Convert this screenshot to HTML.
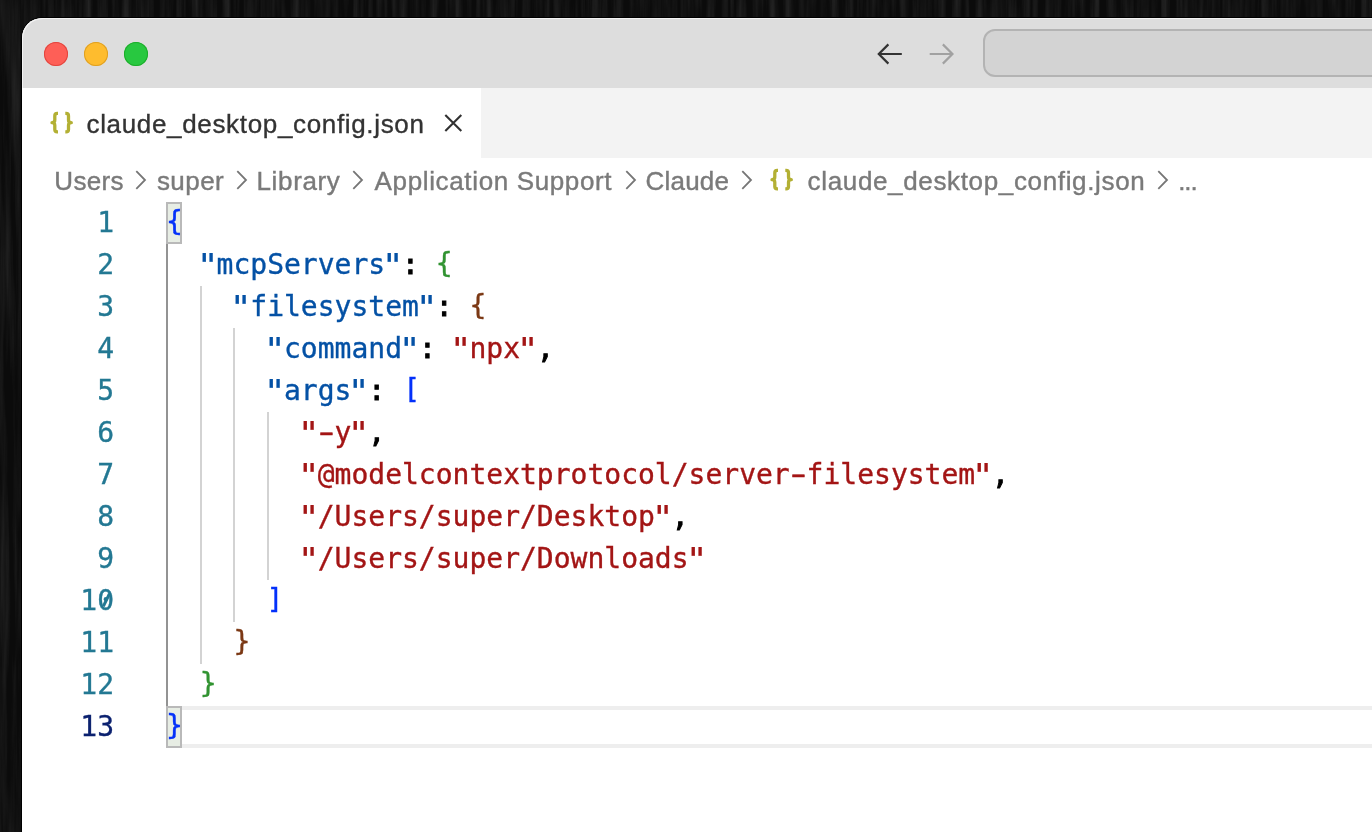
<!DOCTYPE html>
<html lang="en">
<head>
<meta charset="utf-8">
<title>claude_desktop_config.json</title>
<style>
*{box-sizing:border-box;margin:0;padding:0}
html,body{width:1372px;height:832px;overflow:hidden}
body{position:relative;background:#0b0b0b;font-family:"Liberation Sans",sans-serif}
.wood{position:absolute;left:0;top:0;opacity:.1}
.win{position:absolute;left:22px;top:18px;width:1400px;height:900px;background:#fff;border-top-left-radius:20px;overflow:hidden;box-shadow:0 0 0 1px #000;will-change:transform}
.title{position:absolute;left:0;top:0;width:100%;height:70px;background:#ddd;border-top-left-radius:20px;box-shadow:inset 1px 1px 0 0 #f3f3f3}
.tl{position:absolute;top:24px;width:24px;height:24px;border-radius:50%}
.tl.r{left:22px;background:#fe5f57;box-shadow:inset 0 0 0 1px #e2463f}
.tl.y{left:62px;background:#febc2e;box-shadow:inset 0 0 0 1px #dfa023}
.tl.g{left:102px;background:#28c840;box-shadow:inset 0 0 0 1px #1dad2b}
.nav{position:absolute;top:22px;width:30px;height:28px}
.search{position:absolute;left:961px;top:11px;width:500px;height:48px;border:2px solid #b3b3b3;border-radius:12px;background:#d3d3d3}
.tabs{position:absolute;left:0;top:70px;width:100%;height:70px;background:#f3f3f3}
.tab{position:absolute;left:0;top:0;width:459px;height:70px;background:#fff}
.jicon{position:absolute;font-family:"DejaVu Sans","Liberation Sans",sans-serif;font-weight:bold;color:#b7ad2c;white-space:pre}
.tab .label{position:absolute;left:64.5px;top:20.9px;font-size:26px;line-height:30px;color:#333;white-space:pre;letter-spacing:.66px;-webkit-text-stroke:.35px #333}
.crumbs{position:absolute;left:0;top:148.3px;height:30px;font-size:26px;line-height:30px;color:#7a7a7a;white-space:pre}
.crumbs span{position:absolute;top:0;-webkit-text-stroke:.4px #7a7a7a}
.chev{position:absolute;top:4px;width:12px;height:20px}
.jsico{position:absolute;width:24px;height:24px}
.editor{position:absolute;left:0;top:184px;width:100%;height:700px;font-family:"DejaVu Sans Mono","Liberation Mono",monospace;font-size:28px;line-height:42px;-webkit-text-stroke-width:.35px}
.ln{position:absolute;left:0;width:92px;text-align:right;color:#237893;height:42px}
.ln.cur{color:#0b216f}
.z{position:relative}
.z::after{content:"";position:absolute;left:7.4px;top:9.2px;width:2.7px;height:13.6px;background:#237893;transform:rotate(26deg)}
.code{position:absolute;left:144px;height:42px;white-space:pre;color:#000}
.q{display:inline-block;transform:translateX(-.7px) scale(1.3,1.12);transform-origin:50% 30%;-webkit-text-stroke-width:.2px !important}
.code{-webkit-text-stroke-width:1px}.code span{-webkit-text-stroke-width:.35px}
.hy{display:inline-block;transform:scaleX(1.65)}
.k{color:#0451a5}.s{color:#a31515}.b1{color:#0431fa}.b2{color:#319331}.b3{color:#7b3814}
.b1,.b2,.b3{position:relative;top:-1px}
.sq{left:1.2px}.sqc{left:-.6px}
.guide{position:absolute;width:2px;background:#d3d3d3}
.guide.act{background:#939393}
.curline{position:absolute;left:144px;top:504px;width:1300px;height:42px;border-top:4px solid #eee;border-bottom:4px solid #eee}
.bm{position:absolute;left:144px;width:16px;height:42px;border:2px solid #b9b9b9;background:#e7ede4}
</style>
</head>
<body>
<svg class="wood" width="1372" height="832" viewBox="0 0 1372 832" preserveAspectRatio="none"><filter id="grain" x="0" y="0" width="100%" height="100%"><feTurbulence type="fractalNoise" baseFrequency="0.13 0.006" numOctaves="4" seed="7"/><feColorMatrix type="matrix" values="0 0 0 0 1  0 0 0 0 1  0 0 0 0 1  1.6 1.2 0 0 -1.15"/></filter><rect width="1372" height="832" fill="#fff" filter="url(#grain)"/></svg>
<div class="win">
 <div class="title">
  <div class="tl r"></div><div class="tl y"></div><div class="tl g"></div>
  <svg class="nav" style="left:853px" viewBox="0 0 30 28"><path d="M26.8 14H4.2M13.4 4.4L3.8 14l9.6 9.6" fill="none" stroke="#333" stroke-width="2.2"/></svg>
  <svg class="nav" style="left:905px" viewBox="0 0 30 28"><path d="M2.7 14h22.3M15.85 4.4l9.6 9.6-9.6 9.6" fill="none" stroke="#a1a1a1" stroke-width="2.2"/></svg>
  <div class="search"></div>
 </div>
 <div class="tabs">
  <div class="tab">
   <svg class="jsico" style="left:27px;top:23px" viewBox="0 0 24 24"><g fill="none" stroke="#b3b034" stroke-width="3.3" stroke-linejoin="round"><path d="M9 2.45H8.2Q5.8 2.45 5.8 4.9V9Q5.8 11.65 3 11.65Q5.8 11.65 5.8 14.3V18.4Q5.8 20.85 8.2 20.85H9"/><path d="M16.3 2.45h.8Q19.5 2.45 19.5 4.9V9Q19.5 11.65 22.3 11.65Q19.5 11.65 19.5 14.3V18.4Q19.5 20.85 17.1 20.85h-.8"/></g></svg>
   <span class="label">claude_desktop_config.json</span>
   <svg style="position:absolute;left:422px;top:26px;width:19px;height:19px" viewBox="0 0 19 19"><path d="M1.3 1l16 16M17.3 1l-16 16" fill="none" stroke="#333" stroke-width="2.1"/></svg>
  </div>
 </div>
 <div class="crumbs">
  <span style="left:32.3px;letter-spacing:0.35px">Users</span>
  <span style="left:134.9px;letter-spacing:0.45px">super</span>
  <span style="left:234.5px;letter-spacing:0.65px">Library</span>
  <span style="left:352.6px;letter-spacing:0.64px">Application Support</span>
  <span style="left:623.4px;letter-spacing:0.25px">Claude</span>
  <span style="left:785.6px;letter-spacing:0.65px">claude_desktop_config.json</span>
  <span style="left:1156.2px;letter-spacing:-1.1px">...</span>
  <svg class="chev" style="left:113.3px" viewBox="0 0 12 20"><path d="M1.3 1.1L10 10l-8.7 8.9" fill="none" stroke="#767676" stroke-width="1.8"/></svg>
  <svg class="chev" style="left:213.6px" viewBox="0 0 12 20"><path d="M1.3 1.1L10 10l-8.7 8.9" fill="none" stroke="#767676" stroke-width="1.8"/></svg>
  <svg class="chev" style="left:329.6px" viewBox="0 0 12 20"><path d="M1.3 1.1L10 10l-8.7 8.9" fill="none" stroke="#767676" stroke-width="1.8"/></svg>
  <svg class="chev" style="left:602.6px" viewBox="0 0 12 20"><path d="M1.3 1.1L10 10l-8.7 8.9" fill="none" stroke="#767676" stroke-width="1.8"/></svg>
  <svg class="chev" style="left:718.8px" viewBox="0 0 12 20"><path d="M1.3 1.1L10 10l-8.7 8.9" fill="none" stroke="#767676" stroke-width="1.8"/></svg>
  <svg class="chev" style="left:1135.0px" viewBox="0 0 12 20"><path d="M1.3 1.1L10 10l-8.7 8.9" fill="none" stroke="#767676" stroke-width="1.8"/></svg>
  <svg class="jsico" style="left:747.3px;top:1.7px" viewBox="0 0 24 24"><g fill="none" stroke="#b3b034" stroke-width="3.3" stroke-linejoin="round"><path d="M9 2.45H8.2Q5.8 2.45 5.8 4.9V9Q5.8 11.65 3 11.65Q5.8 11.65 5.8 14.3V18.4Q5.8 20.85 8.2 20.85H9"/><path d="M16.3 2.45h.8Q19.5 2.45 19.5 4.9V9Q19.5 11.65 22.3 11.65Q19.5 11.65 19.5 14.3V18.4Q19.5 20.85 17.1 20.85h-.8"/></g></svg>
 </div>
 <div class="editor">
  <div class="curline"></div>
  <div class="bm" style="top:0"></div>
  <div class="bm" style="top:504px"></div>
  <div class="guide act" style="left:144px;top:42px;height:462px"></div>
  <div class="guide" style="left:178px;top:84px;height:378px"></div>
  <div class="guide" style="left:211px;top:126px;height:294px"></div>
  <div class="guide" style="left:245px;top:210px;height:168px"></div>

  <div class="ln" style="top:0">1</div><div class="code" style="top:0"><span class="b1">{</span></div>
  <div class="ln" style="top:42px">2</div><div class="code" style="top:42px">  <span class="k"><span class="q">"</span>mcpServers<span class="q">"</span></span>: <span class="b2">{</span></div>
  <div class="ln" style="top:84px">3</div><div class="code" style="top:84px">    <span class="k"><span class="q">"</span>filesystem<span class="q">"</span></span>: <span class="b3">{</span></div>
  <div class="ln" style="top:126px">4</div><div class="code" style="top:126px">      <span class="k"><span class="q">"</span>command<span class="q">"</span></span>: <span class="s"><span class="q">"</span>npx<span class="q">"</span></span>,</div>
  <div class="ln" style="top:168px">5</div><div class="code" style="top:168px">      <span class="k"><span class="q">"</span>args<span class="q">"</span></span>: <span class="b1 sq">[</span></div>
  <div class="ln" style="top:210px">6</div><div class="code" style="top:210px">        <span class="s"><span class="q">"</span><span class="hy">-</span>y<span class="q">"</span></span>,</div>
  <div class="ln" style="top:252px">7</div><div class="code" style="top:252px">        <span class="s"><span class="q">"</span>@modelcontextprotocol/server<span class="hy">-</span>filesystem<span class="q">"</span></span>,</div>
  <div class="ln" style="top:294px">8</div><div class="code" style="top:294px">        <span class="s"><span class="q">"</span>/Users/super/Desktop<span class="q">"</span></span>,</div>
  <div class="ln" style="top:336px">9</div><div class="code" style="top:336px">        <span class="s"><span class="q">"</span>/Users/super/Downloads<span class="q">"</span></span></div>
  <div class="ln" style="top:378px">1<span class="z">0</span></div><div class="code" style="top:378px">      <span class="b1 sqc">]</span></div>
  <div class="ln" style="top:420px">11</div><div class="code" style="top:420px">    <span class="b3">}</span></div>
  <div class="ln" style="top:462px">12</div><div class="code" style="top:462px">  <span class="b2">}</span></div>
  <div class="ln cur" style="top:504px">13</div><div class="code" style="top:504px"><span class="b1">}</span></div>
 </div>
</div>
</body>
</html>
